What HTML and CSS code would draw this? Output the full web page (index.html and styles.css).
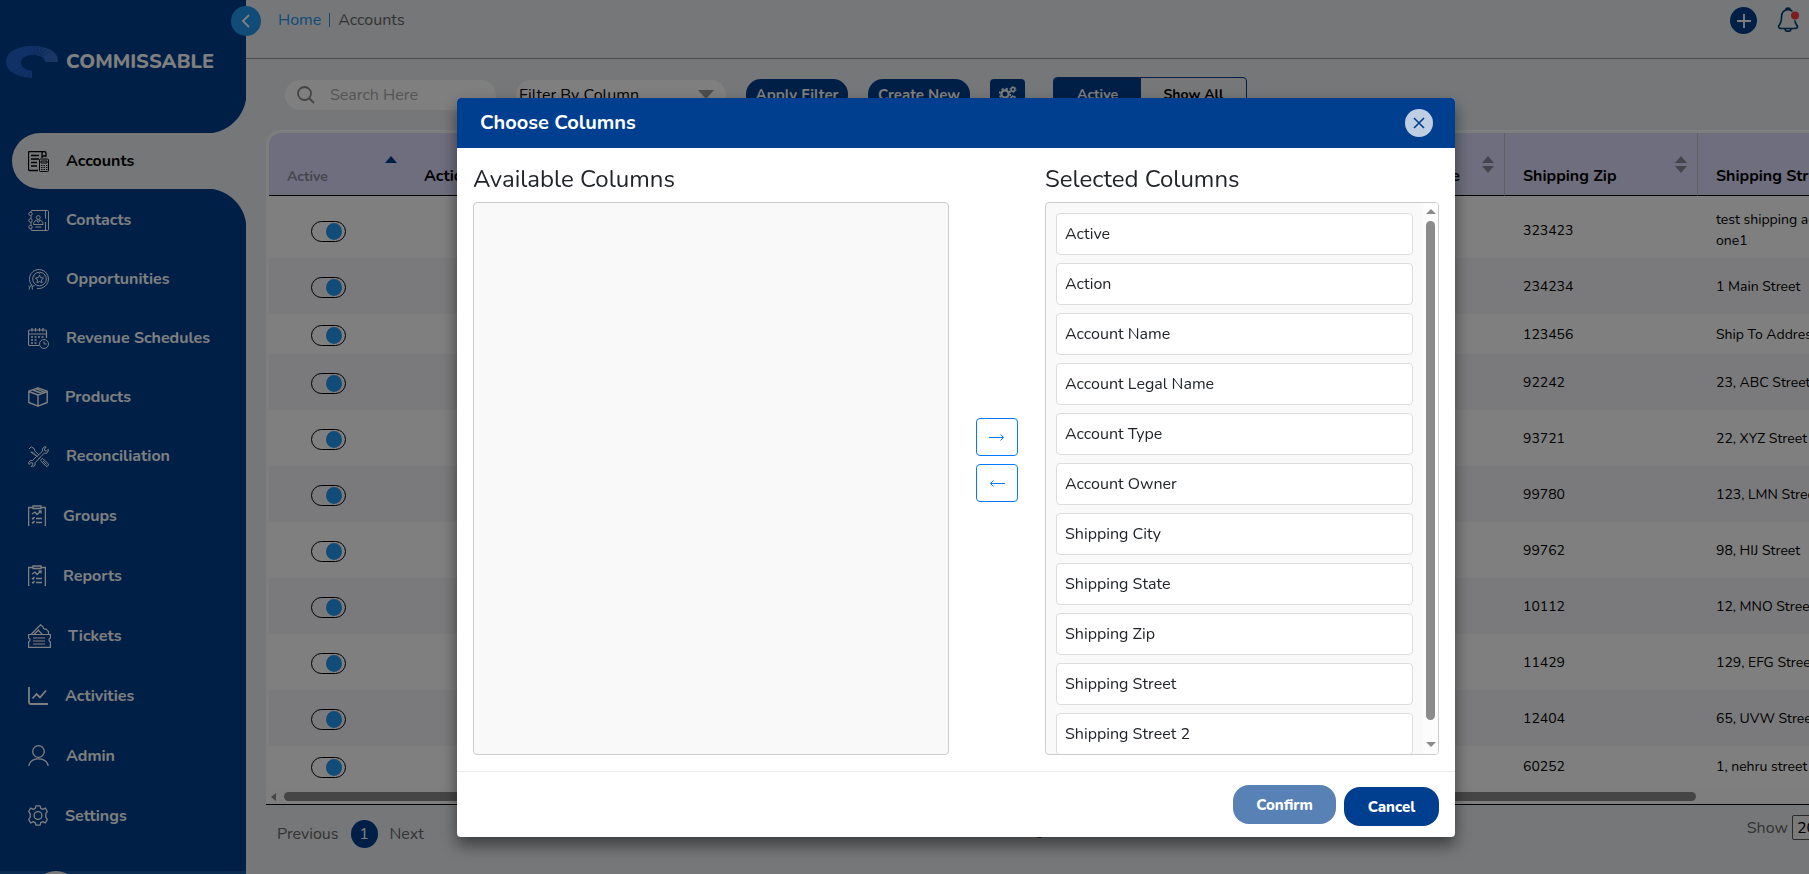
FILE: index.html
```html
<!DOCTYPE html>
<html lang="en">
<head>
<meta charset="utf-8">
<title>Commissable - Accounts</title>
<meta name="viewport" content="width=device-width, initial-scale=1">
<link rel="stylesheet" href="styles.css">
</head>
<body>
<div class="app">
  <aside class="sidebar">
    <a class="brand" href="#">
      <svg width="54" height="34" viewBox="0 0 54 34" aria-hidden="true">
        <defs><linearGradient id="ring" x1="0" y1="0" x2="1" y2="0"><stop offset="0" stop-color="#1f62cc"/><stop offset=".5" stop-color="#1f62d0"/><stop offset="1" stop-color="#3474c8"/></linearGradient></defs>
        <path d="M27 33C12 32 1 26 1 17 1 7 12 1 28 1c16 0 26 7 25 16H40c0-5-5-7-12-7-8 0-12 3-12 8 0 4 4 7 11 8z" fill="url(#ring)"/>
        <path d="M29 1v9M33 2l-2 8M37 2l-4 9M41 4l-6 7M45 6l-9 6M7 27l11-5M11 30l9-6M17 32l5-7M23 33l2-8" stroke="#1553b0" stroke-width=".8"/>
      </svg>
      <span>COMMISSABLE</span>
    </a>
    <nav>
      <ul class="nav">
        <li class="current"><a href="#"><svg class="ic" width="21" height="21" viewBox="0 0 21 21"><path d="M10 19.500H1.500a1 1 0 0 1-1-1v-17a1 1 0 0 1 1-1H17M14 7V2.500a2 2 0 0 1 4 0V5h-4M3 4.500h8M3 8h8M3 11.500h6M3 15h6" stroke-width="1.300"/><rect x="11.500" y="8" width="9" height="12.500" rx="1"/><path d="M13 10h6v2h-6zM13 14.500h1.400M15.500 14.500h1.400M18 14.500h1.400M13 16.500h1.400M15.500 16.500h1.400M18 16.500h1.400M13 18.500h1.400M15.500 18.500h1.400M18 18.500h1.400"/></svg>Accounts</a></li>
        <li><a href="#"><svg class="ic" width="21" height="21" viewBox="0 0 21 21"><path d="M3 3V1.500a1 1 0 0 1 1-1h15.500a1 1 0 0 1 1 1v18a1 1 0 0 1-1 1H4a1 1 0 0 1-1-1V18M3 5.500v3.500M3 12v3.500M17.500 .5v8M17.500 12v8.500"/><circle cx="2.500" cy="3.800" r="1.700"/><circle cx="2.500" cy="10.500" r="1.700"/><circle cx="2.500" cy="17" r="1.700"/><circle cx="10.300" cy="7.500" r="1.900"/><path d="M5.500 14.500c0-3 2-4.500 4.800-4.500s4.800 1.500 4.800 4.500zM8.500 10.500l1.800 2 1.800-2M7.500 17h6"/></svg>Contacts</a></li>
        <li><a href="#"><svg class="ic" width="21" height="21" viewBox="0 0 21 21"><path d="M4 16.500A9.500 9.500 0 1 1 9 19.300M1 20.500l1-3 2-1.500M1 17.500l-.5-1M4.500 20.500l-.5-3 2.500-1"/><circle cx="11.500" cy="10" r="6.800"/><path d="M11.500 6l1.200 2.600 2.800.4-2 2 .5 2.800-2.500-1.300L9 13.800l.5-2.800-2-2 2.800-.4z"/><path d="M11.500 4v.8M6.500 7l.6.400M16.500 7l-.6.400"/></svg>Opportunities</a></li>
        <li><a href="#"><svg class="ic" width="21" height="21" viewBox="0 0 21 21"><path d="M11 17.500H2a1.500 1.500 0 0 1-1.500-1.500V3.500A1.500 1.500 0 0 1 2 2h15a1.500 1.500 0 0 1 1.500 1.500V10M.5 6h18M4 0v3.500M7.500 0v3.500M11.500 0v3.500M15 0v3.500" stroke-width="1.200"/><path d="M3 9h2M6.500 9h2M10 9h2M13.500 9h2M3 12h2M6.500 12h2M3 15h2M6.500 15h2" stroke-width="1.400"/><circle cx="16" cy="16" r="4.500"/><path d="M16 13.500V16h2.500"/></svg>Revenue Schedules</a></li>
        <li><a href="#"><svg class="ic" width="20" height="20" viewBox="0 0 20 20" stroke-linejoin="round"><path d="M10 .8l9.200 3.400v11.300L10 19.200.8 15.500V4.200zM.8 4.500L10 8l9.200-3.500M10 8v11M5 3l9 3.500M8 1.800l8.500 3.300" stroke-width="1.400"/></svg>Products</a></li>
        <li><a href="#"><svg class="ic" width="21" height="21" viewBox="0 0 21 21" stroke-linejoin="round"><path d="M1 3l2.200-2.200 3 1.800.5 2.200 4 4M9 10.500l-4-4-2.200-.5zM8.500 11L14.500 5V2.500L17 .6l1.200.4-1.800 2 .4 1.700 1.700.3 1.700-1.700.3 1.200-1.700 2.700h-2.600l-5.500 5.600M12.500 14.500l5.500 5.800c2 .3 2.800-1 2.300-2.500l-6-5.500zM15 15l3.500 3.500M8.500 10.500l-4 4H2.300L.6 16.800l.4 1.600 1.900-1.800 1.700.3.400 1.800-1.800 1.700 1.400.4 2.500-1.500v-2.600l5-5"/></svg>Reconciliation</a></li>
        <li><a href="#"><svg class="ic" width="18" height="21" viewBox="0 0 18 21"><path d="M1.500 20.500H.6V2.500H5M13 2.500h4.400v18h-.9M5 1h8v2.500H5zM4 9l3-2 2 2.500L13 6M10.500 6H13v2.500M4 13l1 1 1.500-2M8 13.500h6M4 17l1 1 1.500-2M8 17.500h6" stroke-width="1.300"/></svg>Groups</a></li>
        <li><a href="#"><svg class="ic" width="18" height="21" viewBox="0 0 18 21"><path d="M1.500 20.500H.6V2.500H5M13 2.500h4.400v18h-.9M5 1h8v2.500H5zM4 9l3-2 2 2.500L13 6M10.500 6H13v2.500M4 13l1 1 1.500-2M8 13.500h6M4 17l1 1 1.500-2M8 17.500h6" stroke-width="1.300"/></svg>Reports</a></li>
        <li><a href="#"><svg class="ic" width="23" height="24" viewBox="0 0 23 24"><path d="M.6 10.500h21.800v3.500c-2 .8-2 3 0 3.800v5.500H.6v-5.500c2-.8 2-3 0-3.800zM3 10.500L12.500.8l2.500 2c0 2 1.200 2.700 3 2.300l2.500 2.400v3M6 10.500l5-5M10 6l4.500 4.500M5 14h12M5 17h12M5 20h12" stroke-width="1.200"/></svg>Tickets</a></li>
        <li><a href="#"><svg class="ic" width="20" height="18" viewBox="0 0 20 18"><path d="M1 0v15a2 2 0 0 0 2 2h17M4.500 11.500L8.500 7l3.500 3.500L18 3.500" stroke-width="1.800"/></svg>Activities</a></li>
        <li><a href="#"><svg class="ic" width="21" height="21" viewBox="0 0 21 21"><circle cx="10.500" cy="6.500" r="5.800" stroke-width="1.300"/><path d="M.8 21c1-5 4.700-7.200 9.700-7.200s8.700 2.200 9.700 7.200" stroke-width="1.300"/></svg>Admin</a></li>
        <li><a href="#"><svg class="ic" width="20" height="21" viewBox="0 0 20 21" stroke-linejoin="round"><path d="M8 .8h4l.8 2.600 2 .9L17.300 3l2 3.500-1.500 2.300v3.400l1.500 2.300-2 3.500-2.500-1.300-2 .9-.8 2.600H8l-.8-2.600-2-.9L2.700 18l-2-3.500 1.500-2.300V8.800L.7 6.500l2-3.500 2.500 1.300 2-.9z" stroke-width="1.300"/><circle cx="10" cy="10.500" r="3.900" stroke-width="1.300"/></svg>Settings</a></li>
      </ul>
    </nav>
    <div class="profile"><span class="avatar"></span></div>
    <button class="collapse" type="button" aria-label="Collapse menu"><svg width="10" height="16" viewBox="0 0 10 16"><path d="M8 2L2 8l6 6" fill="none" stroke="#fff" stroke-width="1.800"/></svg></button>
  </aside>

  <main class="main">
    <header class="topbar">
      <div class="crumbs"><a href="#">Home</a><span class="bar"></span><span>Accounts</span></div>
      <div class="actions">
        <button class="add" type="button" aria-label="Add"><svg width="14" height="14" viewBox="0 0 14 14"><path d="M7 0v14M0 7h14" stroke="#fff" stroke-width="1.800"/></svg></button>
        <button class="bell" type="button" aria-label="Notifications"><svg width="24" height="26" viewBox="0 0 24 26"><path d="M11 2.500C6 3 4.500 6 4.500 10c0 5-1 7-3 9 0 2 1 2.500 2.500 2.500h14c1.500 0 2.500-.5 2.500-2.500-2-2-3-4-3-9 0-4-1.500-7-6.500-7.500zM9 2.500a2 1.500 0 0 1 4 0M8 22c.5 3 5.500 3 6 0" fill="none" stroke="#003f70" stroke-width="1.600"/><circle cx="18" cy="8.500" r="5" fill="#ebeef1"/><circle cx="18" cy="8.500" r="4" fill="#f53b3b"/></svg></button>
      </div>
    </header>

    <div class="content">
      <div class="tools">
        <label class="search"><svg width="18" height="18" viewBox="0 0 18 18"><circle cx="7.500" cy="7.500" r="6.500" fill="none" stroke="#888" stroke-width="1.800"/><path d="M12 12l5 5" stroke="#888" stroke-width="1.800"/></svg><input type="text" placeholder="Search Here" aria-label="Search"></label>
        <div class="filter"><select aria-label="Filter by column"><option>Filter By Column</option></select></div>
        <button class="pill" type="button">Apply Filter</button>
        <button class="pill" type="button">Create New</button>
        <button class="gear" type="button" aria-label="Column settings"><svg width="18" height="16" viewBox="0 0 18 16" fill="none" stroke="#fff"><circle cx="6" cy="8" r="3.600" stroke-width="2.200"/><circle cx="6" cy="8" r="5.400" stroke-width="1.600" stroke-dasharray="2.200 2.040"/><circle cx="14" cy="3.500" r="1.900" stroke-width="1.500"/><circle cx="14" cy="3.500" r="3" stroke-dasharray="1.400 1.740"/><circle cx="14" cy="12.500" r="1.900" stroke-width="1.500"/><circle cx="14" cy="12.500" r="3" stroke-dasharray="1.400 1.740"/></svg></button>
        <div class="segments"><button class="on" type="button">Active</button><button type="button">Show All</button></div>
      </div>

      <section class="panel">
        <table class="grid">
          <colgroup><col class="c-active"><col class="c-action"><col><col><col><col><col><col class="c-state"><col class="c-wide"><col class="c-wide"></colgroup>
          <thead><tr>
            <th class="muted">Active<i class="sort up"></i></th><th>Action</th><th>Account Name</th><th>Legal Name</th><th>Account Type</th><th>Owner</th><th>Shipping City</th><th class="ruled">Shipping State<i class="sort"></i></th><th class="ruled">Shipping Zip<i class="sort"></i></th><th>Shipping Street<i class="sort"></i></th>
          </tr></thead>
          <tbody>
            <tr class="first"><td><input type="checkbox" checked aria-label="Active"></td><td colspan="7"></td><td>323423</td><td>test shipping address one1</td></tr>
            <tr><td><input type="checkbox" checked aria-label="Active"></td><td colspan="7"></td><td>234234</td><td>1 Main Street</td></tr>
            <tr class="short"><td><input type="checkbox" checked aria-label="Active"></td><td colspan="7"></td><td>123456</td><td>Ship To Address</td></tr>
            <tr><td><input type="checkbox" checked aria-label="Active"></td><td colspan="7"></td><td>92242</td><td>23, ABC Street</td></tr>
            <tr><td><input type="checkbox" checked aria-label="Active"></td><td colspan="7"></td><td>93721</td><td>22, XYZ Street</td></tr>
            <tr><td><input type="checkbox" checked aria-label="Active"></td><td colspan="7"></td><td>99780</td><td>123, LMN Street</td></tr>
            <tr><td><input type="checkbox" checked aria-label="Active"></td><td colspan="7"></td><td>99762</td><td>98, HIJ Street</td></tr>
            <tr><td><input type="checkbox" checked aria-label="Active"></td><td colspan="7"></td><td>10112</td><td>12, MNO Street</td></tr>
            <tr><td><input type="checkbox" checked aria-label="Active"></td><td colspan="7"></td><td>11429</td><td>129, EFG Street</td></tr>
            <tr><td><input type="checkbox" checked aria-label="Active"></td><td colspan="7"></td><td>12404</td><td>65, UVW Street</td></tr>
            <tr class="short"><td><input type="checkbox" checked aria-label="Active"></td><td colspan="7"></td><td>60252</td><td>1, nehru street</td></tr>
          </tbody>
        </table>
        <div class="hscroll"><i class="arrow"></i><i class="thumb"></i></div>
      </section>

      <footer class="pager">
        <div class="pages"><a href="#">Previous</a><a class="page" href="#">1</a><a href="#">Next</a></div>
        <span class="summary">Showing 1 to 11 of 11</span>
        <label class="size">Show <select><option>20</option></select></label>
      </footer>
    </div>
  </main>
</div>

<div class="backdrop">
  <div class="modal" role="dialog" aria-modal="true" aria-labelledby="modal-title">
    <header class="modal-head">
      <h2 id="modal-title">Choose Columns</h2>
      <button class="close" type="button" aria-label="Close"><svg width="12" height="12" viewBox="0 0 12 12"><path d="M1 1l10 10M11 1L1 11" stroke="#003f8f" stroke-width="1.600"/></svg></button>
    </header>
    <div class="modal-body">
      <section class="pane"><h3>Available Columns</h3><div class="box"></div></section>
      <div class="movers">
        <button type="button" aria-label="Add column"><svg width="16" height="8" viewBox="0 0 16 8"><path d="M0 4.500h14.500M11.500 1.500l3 3-3 3" fill="none" stroke="#007bff"/></svg></button>
        <button type="button" aria-label="Remove column"><svg width="16" height="8" viewBox="0 0 16 8"><path d="M16 4.500H1.500M4.500 1.500l-3 3 3 3" fill="none" stroke="#007bff"/></svg></button>
      </div>
      <section class="pane"><h3>Selected Columns</h3>
        <div class="box listed">
          <ul class="columns">
            <li>Active</li><li>Action</li><li>Account Name</li><li>Account Legal Name</li><li>Account Type</li><li>Account Owner</li><li>Shipping City</li><li>Shipping State</li><li>Shipping Zip</li><li>Shipping Street</li><li>Shipping Street 2</li>
          </ul>
          <div class="vscroll"><i class="tip"></i><i class="thumb"></i><i class="tip down"></i></div>
        </div>
      </section>
    </div>
    <footer class="modal-foot">
      <button class="confirm" type="button" disabled>Confirm</button>
      <button class="cancel" type="button">Cancel</button>
    </footer>
  </div>
</div>
</body>
</html>
```
FILE: styles.css
```css
:root { --navy: #003f8f; --sky: #2399f3; --page: #ebeef1; --line: #ccc; }
* { box-sizing: border-box; }
body { margin: 0; font: 16px/24px Nunito, Lato, "Noto Sans", sans-serif; color: #212529; overflow: hidden; }
button, input, select { font: inherit; color: inherit; margin: 0; padding: 0; border: 0; background: none; }
a { color: inherit; text-decoration: none; }
ul { list-style: none; margin: 0; padding: 0; }
h2, h3 { margin: 0; }

.app { display: flex; height: 100vh; background: var(--page); overflow: hidden; }

.sidebar { position: relative; z-index: 1; flex: none; width: 246px; display: flex; flex-direction: column; background: var(--navy); color: #fff; font-weight: 700; }
.brand { flex: none; display: flex; align-items: center; gap: 7px; height: 133px; padding: 0 0 9px 5px; font-size: 20px; font-weight: 800; }
.nav { display: flex; flex-direction: column; gap: 3px; }
.nav li { min-height: 56px; padding-left: 28px; display: flex; align-items: center; }
.nav li:nth-child(n+7) { min-height: 57px; }
.nav a { display: flex; align-items: center; gap: 17px; }
.ic { fill: none; stroke: currentColor; }
.nav .current { position: relative; margin-left: 12px; padding-left: 16px; border-radius: 28px 0 0 28px; background: var(--page); color: #000; }
.current::before, .current::after { content: ""; position: absolute; right: 0; width: 40px; height: 40px; }
.current::before { bottom: 100%; background: radial-gradient(circle at 0 0, transparent 40px, var(--page) 41px); }
.current::after { top: 100%; background: radial-gradient(circle at 0 100%, transparent 40px, var(--page) 41px); }
.profile { flex: none; height: 60px; margin-top: 27px; padding-left: 34px; background: #1457a5; }
.avatar { display: block; width: 44px; height: 44px; border-radius: 50%; background: #f4f4f4; }
.collapse { position: absolute; top: 6px; right: -15px; width: 30px; height: 30px; border-radius: 50%; background: var(--sky); display: grid; place-items: center; }

.main { flex: 1; min-width: 0; }
.topbar { display: flex; justify-content: space-between; height: 59px; padding: 6px 8px 0 32px; border-bottom: 1px solid #9a9a9a; }
.crumbs { display: flex; align-items: center; gap: 8px; height: 28px; color: #666; }
.crumbs a { color: var(--sky); }
.bar { width: 1px; height: 14px; background: var(--sky); }
.actions { display: flex; align-items: flex-start; gap: 20px; height: 28px; }
.add { width: 27px; height: 27px; margin-top: 1px; border-radius: 50%; background: var(--navy); display: grid; place-items: center; }
.bell { height: 26px; margin-top: 1px; }

.content { width: calc(100% + 82px); padding: 18px 0 0 20px; }
.tools { display: flex; align-items: flex-start; gap: 20px; height: 53px; padding: 2px 0 0 19px; font-size: 15px; font-weight: 700; }
.search { display: flex; align-items: center; gap: 15px; width: 211px; height: 30px; margin-top: 1px; padding: 0 12px; border-radius: 15px; background: #fff; font-weight: 400; font-size: 16px; }
.search svg { flex: none; }
.search input { width: 100%; outline: 0; }
.search input::placeholder { color: #aaa; }
.filter { position: relative; width: 210px; height: 30px; margin-top: 1px; border-radius: 15px; background: #fff; }
.filter select { appearance: none; width: 100%; height: 30px; padding-left: 3px; font-size: 16px; font-weight: 400; color: #000; }
.filter::after { content: ""; position: absolute; top: 10px; right: 12px; border: 8px solid transparent; border-top: 9px solid #999; border-bottom: 0; }
.pill { width: 102px; height: 32px; border-radius: 15px; background: var(--navy); color: #fff; }
.gear { width: 35px; height: 30px; border-radius: 4px; background: var(--navy); display: grid; place-items: center; }
.segments { display: flex; height: 36px; margin: -2px 0 0 8px; border: 1px solid var(--navy); border-radius: 4px; overflow: hidden; color: #000; font-size: 14px; }
.segments button { width: 105px; }
.segments .on { width: 87px; background: var(--navy); color: #fff; }

.panel { padding: 3px 0 0 3px; border-bottom: 1px solid #000; border-radius: 15px 0 0 0; background: #fcfcfc; }
.grid { width: 100%; border-collapse: separate; border-spacing: 0; table-layout: fixed; color: #000; font-size: 14px; line-height: 21px; }
.c-active { width: 137px; } .c-action { width: 134px; } .c-state { width: 173px; } .c-wide { width: 193px; }
.grid th { position: relative; height: 63px; padding: 0 18px 7px; vertical-align: bottom; text-align: left; font-size: 16px; line-height: 24px; white-space: nowrap; background: #dedcfc; border-bottom: 1px solid #000; }
.grid th:first-child { border-radius: 12px 0 0 0; }
.grid .muted { padding-bottom: 6px; color: #8d8a9c; font-size: 14px; }
.grid .ruled { border-right: 1px solid #c3c2c9; }
.sort::before, .sort::after { content: ""; position: absolute; right: 10px; border: 6px solid transparent; }
.sort::before { bottom: 32px; border-top: 0; border-bottom: 7px solid #8b899a; }
.sort::after { bottom: 22px; border-bottom: 0; border-top: 7px solid #8b899a; }
.sort.up::before { right: 9px; border-bottom-color: var(--navy); }
.sort.up::after { display: none; }
.grid td { height: 56px; padding: 0 18px; background: #fff; }
.grid tr:nth-child(even) td { background: #f5f5f8; }
.grid .first td { height: 62px; padding-top: 6px; }
.grid .short td { height: 40px; }
.grid td:first-child { padding: 3px 0 0 42px; }
.grid .first td:first-child { padding-top: 9px; }
.grid input { appearance: none; display: block; width: 35px; height: 21px; padding: 1px 3px; border: 1px solid #000; border-radius: 11px; }
.grid input::before { content: ""; display: block; width: 16px; height: 17px; margin-left: auto; border-radius: 50%; background: var(--sky); }
.hscroll { display: flex; align-items: center; gap: 8px; height: 18px; padding: 3px 195px 0 2px; }
.arrow { border: 4px solid transparent; border-left: 0; border-right: 5px solid #8b8b8b; }
.hscroll .thumb { flex: 1; height: 9px; border-radius: 5px; background: #8b8b8b; }
.pager { display: flex; align-items: flex-start; justify-content: space-between; padding: 10px 51px 0 11px; color: #666; }
.pages { display: flex; align-items: center; gap: 12px; width: 704px; margin-top: 5px; }
.page { width: 27px; height: 28px; line-height: 28px; border-radius: 50%; background: var(--navy); color: #fff; text-align: center; }
.summary { flex: 1; margin-top: 3px; }
.size select { width: 48px; height: 25px; border: 1px solid #555; border-radius: 2px; background: #f4f4f4; color: #000; }

.backdrop { position: fixed; inset: 0; z-index: 10; display: flex; align-items: flex-start; justify-content: center; padding: 98px 0 0 103px; background: rgba(0, 0, 0, .5); }
.modal { width: 998px; max-width: 90%; border-radius: 4px; background: #fff; overflow: hidden; box-shadow: 0 8px 16px rgba(0, 0, 0, .5); }
.modal-head { display: flex; align-items: center; justify-content: space-between; height: 50px; padding: 0 22px 0 23px; background: var(--navy); color: #fff; }
.modal-head h2 { font-size: 20px; font-weight: 700; }
.close { width: 28px; height: 28px; border-radius: 50%; background: #bfcfe3; display: grid; place-items: center; }
.modal-body { display: grid; grid-template-columns: 476fr 96px 394fr; padding: 16px; }
.pane h3 { margin-bottom: 7px; font-size: 24px; line-height: 31px; font-weight: 400; }
.box { height: 553px; border: 1px solid var(--line); border-radius: 4px; background: #f9f9f9; overflow: hidden; }
.listed { display: flex; }
.columns { flex: 1; padding: 10px; }
.columns li { height: 42px; margin-bottom: 8px; padding: 8px; border: 1px solid #ddd; border-radius: 4px; background: #fff; }
.vscroll { display: flex; flex-direction: column; align-items: center; gap: 7px; width: 15px; padding: 6px 0 7px; background: #fcfcfc; }
.vscroll .thumb { width: 9px; height: 499px; border-radius: 5px; background: #8b8b8b; }
.tip { border: 5px solid transparent; border-top: 0; border-bottom-color: #8b8b8b; }
.tip.down { margin-top: auto; border-top: 5px solid #8b8b8b; border-bottom: 0; }
.movers { display: flex; flex-direction: column; align-items: center; justify-content: center; gap: 8px; }
.movers button { width: 42px; height: 38px; border: 1px solid #007bff; border-radius: 4px; display: grid; place-items: center; }
.modal-foot { display: flex; justify-content: flex-end; gap: 8px; padding: 13px 16px 11px; border-top: 1px solid #e9ecef; }
.modal-foot button { height: 39px; border-radius: 16px; background: var(--navy); color: #fff; font-size: 15px; font-weight: 800; }
.modal-foot .confirm { width: 103px; margin-bottom: 2px; opacity: .65; }
.modal-foot .cancel { width: 95px; margin-top: 2px; }
```
